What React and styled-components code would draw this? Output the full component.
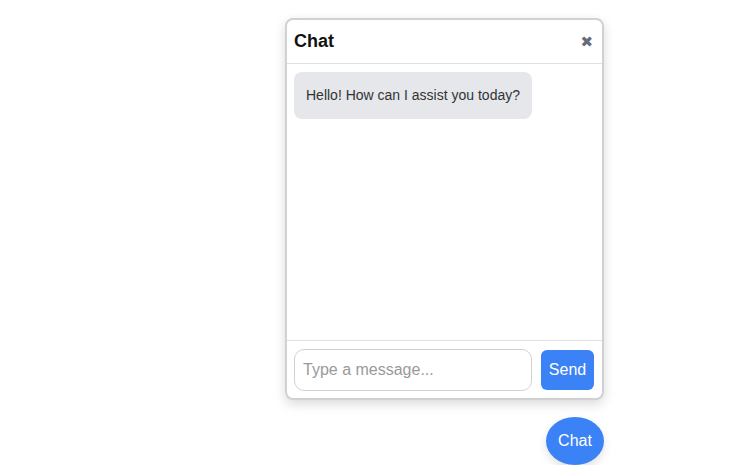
import React, { useState } from "react";
import styled, { createGlobalStyle } from "styled-components";

const GlobalStyle = createGlobalStyle`
  body {
    margin: 0;
    background: #ffffff;
    font-family: "Liberation Sans", Arial, sans-serif;
  }
`;

const Page = styled.div`
  display: flex;
  flex-direction: column;
  align-items: flex-end;
  gap: 17px;
  padding: 18px 144px 0 0;
`;

const ChatWindow = styled.div`
  box-sizing: border-box;
  width: 319px;
  height: 382px;
  display: flex;
  flex-direction: column;
  background: #fff;
  border: 2px solid #d1d1d1;
  border-radius: 8px;
  box-shadow: 0 4px 12px rgba(0, 0, 0, 0.15);
  overflow: hidden;
`;

const Header = styled.div`
  display: flex;
  align-items: center;
  justify-content: space-between;
  height: 43px;
  padding: 0 9px 0 7px;
  border-bottom: 1px solid #e0e0e0;
`;

const Title = styled.h2`
  margin: 0;
  font-size: 18px;
  font-weight: bold;
  color: #111;
`;

const CloseButton = styled.button`
  border: none;
  background: none;
  padding: 0;
  font-size: 15px;
  color: #666a78;
  cursor: pointer;
  font-family: "DejaVu Sans", sans-serif;
`;

const Messages = styled.div`
  flex: 1;
  padding: 8px 7px;
  display: flex;
  flex-direction: column;
  align-items: flex-start;
  gap: 8px;
`;

const Bubble = styled.div`
  padding: 13px 12px;
  line-height: 21px;
  font-size: 14px;
  color: #333;
  background: ${(p) => (p.mine ? "#3b82f6" : "#e5e7eb")};
  border-radius: 8px;
`;

const Footer = styled.div`
  display: flex;
  align-items: center;
  gap: 9px;
  padding: 8px 8px 7px 7px;
  border-top: 1px solid #e0e0e0;
`;

const Input = styled.input`
  box-sizing: border-box;
  flex: 1;
  height: 42px;
  padding: 0 8px;
  font-size: 16px;
  font-family: "Liberation Sans", Arial, sans-serif;
  border: 1px solid #d1d1d1;
  border-radius: 10px;
  outline: none;
  &::placeholder {
    color: #9a9a9a;
  }
`;

const SendButton = styled.button`
  height: 40px;
  width: 53px;
  padding: 0;
  font-size: 16px;
  font-family: "Liberation Sans", Arial, sans-serif;
  color: #fff;
  background: #3b82f6;
  border: none;
  border-radius: 6px;
  cursor: pointer;
`;

const ToggleButton = styled.button`
  width: 58px;
  height: 48px;
  padding: 0;
  font-size: 16px;
  font-family: "Liberation Sans", Arial, sans-serif;
  color: #fff;
  background: #3b82f6;
  border: none;
  border-radius: 50%;
  box-shadow: 0 4px 10px rgba(0, 0, 0, 0.12);
  cursor: pointer;
`;

export default function App() {
  const [open, setOpen] = useState(true);
  const [text, setText] = useState("");
  const messages = [{ id: 1, text: "Hello! How can I assist you today?" }];

  return (
    <>
      <GlobalStyle />
      <Page>
        {open && (
          <ChatWindow>
            <Header>
              <Title>Chat</Title>
              <CloseButton onClick={() => setOpen(false)}>✖</CloseButton>
            </Header>
            <Messages>
              {messages.map((m) => (
                <Bubble key={m.id}>{m.text}</Bubble>
              ))}
            </Messages>
            <Footer>
              <Input
                placeholder="Type a message..."
                value={text}
                onChange={(e) => setText(e.target.value)}
              />
              <SendButton>Send</SendButton>
            </Footer>
          </ChatWindow>
        )}
        <ToggleButton onClick={() => setOpen(!open)}>Chat</ToggleButton>
      </Page>
    </>
  );
}
